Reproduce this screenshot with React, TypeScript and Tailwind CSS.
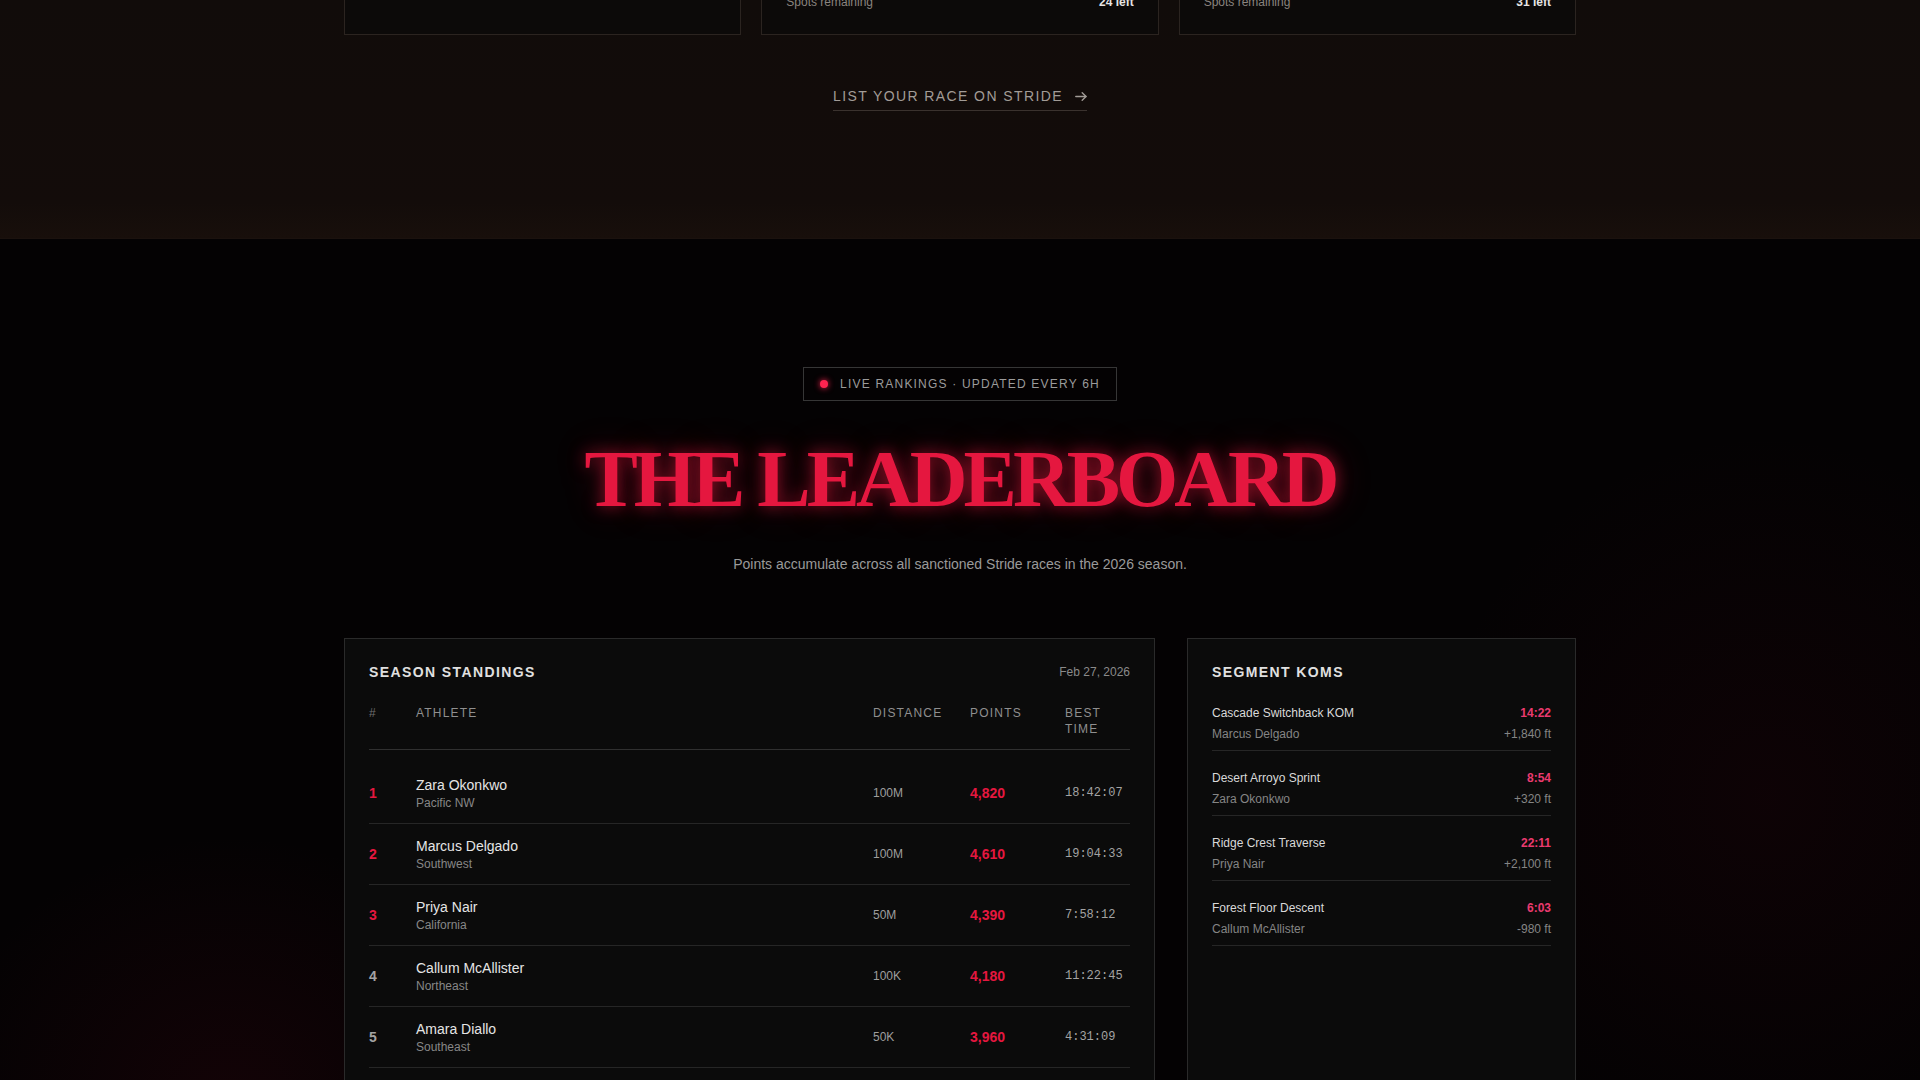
import React from "react";

const races = [
  { id: "r1", spots: null },
  { id: "r2", spots: "24 left" },
  { id: "r3", spots: "31 left" },
];

const standings = [
  { rank: 1, name: "Zara Okonkwo", region: "Pacific NW", dist: "100M", pts: "4,820", time: "18:42:07" },
  { rank: 2, name: "Marcus Delgado", region: "Southwest", dist: "100M", pts: "4,610", time: "19:04:33" },
  { rank: 3, name: "Priya Nair", region: "California", dist: "50M", pts: "4,390", time: "7:58:12" },
  { rank: 4, name: "Callum McAllister", region: "Northeast", dist: "100K", pts: "4,180", time: "11:22:45" },
  { rank: 5, name: "Amara Diallo", region: "Southeast", dist: "50K", pts: "3,960", time: "4:31:09" },
];

const koms = [
  { seg: "Cascade Switchback KOM", who: "Marcus Delgado", time: "14:22", elev: "+1,840 ft" },
  { seg: "Desert Arroyo Sprint", who: "Zara Okonkwo", time: "8:54", elev: "+320 ft" },
  { seg: "Ridge Crest Traverse", who: "Priya Nair", time: "22:11", elev: "+2,100 ft" },
  { seg: "Forest Floor Descent", who: "Callum McAllister", time: "6:03", elev: "-980 ft" },
];

function Arrow() {
  return (
    <svg width="12" height="9" viewBox="0 0 12 9" fill="none" stroke="currentColor" strokeWidth="1.4" strokeLinecap="round" strokeLinejoin="round">
      <path d="M0.8 4.5H11" />
      <path d="M7.2 0.8L11 4.5L7.2 8.2" />
    </svg>
  );
}

export default function App() {
  return (
    <div className="min-h-screen bg-[#040203] font-['Liberation_Sans',Arial,sans-serif] text-[#e5e5e5]">
      {/* Races section (scrolled, only the bottom is visible) */}
      <section className="flex flex-col border-b border-[#1b120e] bg-[linear-gradient(to_bottom,#110c0a_0%,#130c0a_85%,#180f0b_100%)] pb-[127px]">
        <div className="mx-auto w-full max-w-7xl px-6">
          <div className="-mt-[197px] grid grid-cols-3 gap-5">
            {races.map((r) => (
              <div key={r.id} className="flex flex-col border border-[#2b2420] bg-[#0c0a09] p-6">
                <div className="h-[150px]" />
                {r.spots ? (
                  <div className="mt-4 flex items-center justify-between text-xs leading-4">
                    <span className="text-[#8a847f]">Spots remaining</span>
                    <span className="font-bold text-[#e7e5e4]">{r.spots}</span>
                  </div>
                ) : (
                  <div className="mt-4 h-4" />
                )}
              </div>
            ))}
          </div>
          <div className="mt-[51px] flex justify-center">
            <a className="inline-flex items-center gap-3 border-b border-[#3a322e] pb-1 text-sm leading-5 uppercase tracking-widest text-[#a29c97]">
              List your race on Stride
              <Arrow />
            </a>
          </div>
        </div>
      </section>

      {/* Leaderboard section */}
      <section className="bg-[radial-gradient(ellipse_420px_380px_at_12%_85%,rgba(110,8,28,0.14),transparent_70%),radial-gradient(ellipse_480px_520px_at_92%_55%,rgba(110,8,28,0.09),transparent_70%)] pb-24 pt-32">
        <div className="mx-auto max-w-7xl px-6">
          <div className="flex justify-center">
            <div className="inline-flex items-center gap-3 border border-[#363636] px-4 py-2 text-xs leading-4 uppercase tracking-widest text-[#9b9b9b]">
              <span className="h-2 w-2 rounded-full bg-[#ff2450] shadow-[0_0_6px_#ff2450]" />
              Live Rankings · Updated every 6h
            </div>
          </div>

          <h2 className="mt-[38px] text-center font-['Liberation_Serif',serif] text-[80px] font-bold leading-none tracking-tighter text-[#e5173f] [text-shadow:0_0_16px_rgba(255,30,70,0.55),0_0_36px_rgba(255,30,70,0.25)]">
            THE LEADERBOARD
          </h2>

          <p className="mt-[35px] text-center text-sm leading-5 text-[#9a9a9a]">
            Points accumulate across all sanctioned Stride races in the 2026 season.
          </p>

          <div className="mt-16 grid grid-cols-[1fr_389px] items-start gap-8">
            {/* Season standings */}
            <div className="min-h-[520px] border border-[#2a2a2a] bg-[#0b0b0b] p-6">
              <div className="mb-6 flex items-center justify-between">
                <h3 className="text-sm font-bold leading-[18px] uppercase tracking-widest text-[#e0e0e0]">Season Standings</h3>
                <span className="text-xs text-[#8a8a8a]">Feb 27, 2026</span>
              </div>
              <div className="grid grid-cols-[47px_1fr_97px_95px_65px] items-start border-b border-[#303030] pb-3 text-xs leading-4 uppercase tracking-widest text-[#8f8f8f]">
                <span className="text-[#6f6f6f]">#</span>
                <span>Athlete</span>
                <span>Distance</span>
                <span>Points</span>
                <span>Best Time</span>
              </div>
              <div className="mt-[13px]">
                {standings.map((s) => (
                  <div key={s.rank} className="grid grid-cols-[47px_1fr_97px_95px_65px] items-center border-b border-[#262626] py-3">
                    <span className={`text-sm font-bold ${s.rank <= 3 ? "text-[#e5173f]" : "text-[#a3a3a3]"}`}>{s.rank}</span>
                    <div className="flex flex-col">
                      <span className="text-sm leading-5 text-[#e5e5e5]">{s.name}</span>
                      <span className="text-xs leading-4 text-[#878787]">{s.region}</span>
                    </div>
                    <span className="text-xs text-[#9e9e9e]">{s.dist}</span>
                    <span className="text-sm font-bold text-[#e5173f]">{s.pts}</span>
                    <span className="font-['Liberation_Mono',monospace] text-xs text-[#a3a3a3]">{s.time}</span>
                  </div>
                ))}
              </div>
            </div>

            {/* Segment KOMs */}
            <div className="min-h-[520px] border border-[#2a2a2a] bg-[#0b0b0b] p-6">
              <h3 className="mb-[5px] text-sm font-bold leading-[18px] uppercase tracking-widest text-[#e0e0e0]">Segment KOMs</h3>
              <div className="flex flex-col">
                {koms.map((k) => (
                  <div key={k.seg} className="border-b border-[#262626] pb-2 pt-[19px]">
                    <div className="flex items-center justify-between text-xs leading-4">
                      <span className="text-[#d9d9d9]">{k.seg}</span>
                      <span className="font-bold text-[#ea3a6f]">{k.time}</span>
                    </div>
                    <div className="mt-[5px] flex items-center justify-between text-xs leading-4 text-[#858585]">
                      <span>{k.who}</span>
                      <span>{k.elev}</span>
                    </div>
                  </div>
                ))}
              </div>
            </div>
          </div>
        </div>
      </section>
    </div>
  );
}
